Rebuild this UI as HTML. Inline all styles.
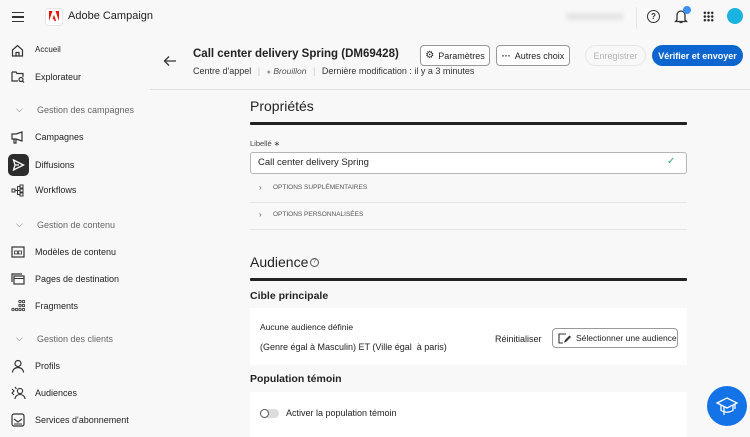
<!DOCTYPE html>
<html><head><meta charset="utf-8"><style>
*{box-sizing:border-box;margin:0;padding:0}
body{width:750px;height:437px;overflow:hidden;background:#f8f8f8;font-family:"Liberation Sans",sans-serif;color:#2c2c2c;position:relative}
.a{position:absolute;white-space:nowrap}
.nav{font-size:9px;color:#222}
.grp{font-size:9px;color:#666}
.btn{position:absolute;border:1px solid #999;border-radius:4px;background:#fff;font-size:9px;display:flex;align-items:center;justify-content:center;gap:4px;color:#222;white-space:nowrap}
</style></head><body>
<!-- top bar -->
<div class="a" style="left:12px;top:12px;width:12px;height:10px;border-top:1.5px solid #333;border-bottom:1.5px solid #333"></div>
<div class="a" style="left:12px;top:16px;width:12px;height:1.5px;background:#333"></div>
<div class="a" style="left:45px;top:8px;width:18px;height:18px;background:#fff;border-radius:3px;border:1px solid #e5e5e5"></div>
<svg class="a" style="left:49px;top:11px" width="10" height="10" viewBox="0 0 10 10"><path d="M3.5 0H0V10ZM6.5 0H10V10ZM5 3.7L7.2 10H5.6L5 8.2H3.5Z" fill="#eb1000"/></svg>
<div class="a" style="left:68px;top:10px;font-size:11px;color:#222">Adobe Campaign</div>
<div class="a" style="left:566px;top:13px;width:58px;height:7px;background:#e4e4e4;border-radius:4px;filter:blur(2px)"></div>
<div class="a" style="left:636px;top:7px;width:1px;height:22px;background:#e6e6e6"></div>
<div class="a" style="left:647px;top:10px;width:13px;height:13px;border:1.4px solid #333;border-radius:50%;font-size:8px;text-align:center;line-height:11px;font-weight:bold">?</div>
<svg class="a" style="left:674px;top:9px" width="14" height="15" viewBox="0 0 14 15"><path d="M3 11V6a4 4 0 0 1 8 0v5l1.5 1.5h-11ZM5.5 13.5h3" fill="none" stroke="#333" stroke-width="1.3"/></svg>
<div class="a" style="left:683px;top:6px;width:8px;height:8px;border-radius:50%;background:#3d8ff0"></div>
<div class="a" style="left:703px;top:11px;width:11px;height:11px;background:radial-gradient(circle,#222 1.1px,transparent 1.4px) 0 0/3.7px 3.7px"></div>
<div class="a" style="left:727px;top:8px;width:16px;height:16px;border-radius:50%;background:#19b3dd"></div>
<!-- sidebar -->
<svg class="a" style="left:11px;top:44px" width="13" height="13" viewBox="0 0 13 13"><path d="M1.5 6L6.5 1.5 11.5 6V12H1.5Z M5 12V8.5H8V12" fill="none" stroke="#333" stroke-width="1.2"/></svg>
<div class="a nav" style="left:35px;top:45px;font-size:8px">Accueil</div>
<svg class="a" style="left:11px;top:70px" width="14" height="13" viewBox="0 0 14 13"><path d="M1 2H5L6 3.5H12V7M1 2V11H7" fill="none" stroke="#333" stroke-width="1.2"/><circle cx="10" cy="9.5" r="2" fill="none" stroke="#333" stroke-width="1.2"/><path d="M11.5 11L13 12.5" stroke="#333" stroke-width="1.2"/></svg>
<div class="a nav" style="left:35px;top:72px">Explorateur</div>
<div class="a grp" style="left:16px;top:104px">⌵</div>
<div class="a grp" style="left:37px;top:105px">Gestion des campagnes</div>
<svg class="a" style="left:11px;top:131px" width="14" height="13" viewBox="0 0 14 13"><path d="M1 3H5L11 1V10L5 8H1ZM3 8V12H5V8" fill="none" stroke="#333" stroke-width="1.2"/></svg>
<div class="a nav" style="left:35px;top:132px">Campagnes</div>
<div class="a" style="left:8px;top:154px;width:21px;height:22px;background:#2c2c2c;border-radius:5px"></div>
<svg class="a" style="left:12px;top:159px" width="13" height="12" viewBox="0 0 13 12"><path d="M1.5 1L11.5 6 1.5 11 3 6ZM3 6H7" fill="none" stroke="#fff" stroke-width="1.3"/></svg>
<div class="a nav" style="left:35px;top:160px">Diffusions</div>
<svg class="a" style="left:11px;top:184px" width="14" height="13" viewBox="0 0 14 13"><rect x="1" y="5" width="3" height="3" fill="none" stroke="#333"/><rect x="9" y="1" width="3" height="3" fill="none" stroke="#333"/><rect x="9" y="5" width="3" height="3" fill="none" stroke="#333"/><rect x="9" y="9" width="3" height="3" fill="none" stroke="#333"/><path d="M4 6.5H9M6.5 2.5V10.5H9M6.5 2.5H9" fill="none" stroke="#333"/></svg>
<div class="a nav" style="left:35px;top:185px">Workflows</div>
<div class="a grp" style="left:16px;top:219px">⌵</div>
<div class="a grp" style="left:37px;top:220px">Gestion de contenu</div>
<svg class="a" style="left:11px;top:246px" width="14" height="12" viewBox="0 0 14 12"><rect x="1" y="1" width="12" height="10" fill="none" stroke="#333" stroke-width="1.2"/><rect x="3.5" y="5" width="3" height="3" fill="none" stroke="#333" stroke-width=".8"/><rect x="7.5" y="5" width="3" height="3" fill="none" stroke="#333" stroke-width=".8"/></svg>
<div class="a nav" style="left:35px;top:247px">Modèles de contenu</div>
<svg class="a" style="left:11px;top:273px" width="14" height="12" viewBox="0 0 14 12"><path d="M1 9V1H11" fill="none" stroke="#333" stroke-width="1.2"/><rect x="3" y="3" width="10" height="8" fill="none" stroke="#333" stroke-width="1.2"/><path d="M3 5.5H13" stroke="#333"/></svg>
<div class="a nav" style="left:35px;top:274px">Pages de destination</div>
<svg class="a" style="left:11px;top:299px" width="14" height="13" viewBox="0 0 14 13"><g fill="none" stroke="#333" stroke-width=".9"><circle cx="2" cy="10.5" r="1.2"/><circle cx="5.5" cy="10.5" r="1.2"/><circle cx="9" cy="10.5" r="1.2"/><circle cx="12.5" cy="10.5" r="1.2"/><circle cx="9" cy="6.5" r="1.2"/><circle cx="12.5" cy="6.5" r="1.2"/><circle cx="9" cy="2.5" r="1.2"/><circle cx="12.5" cy="2.5" r="1.2"/></g></svg>
<div class="a nav" style="left:35px;top:301px">Fragments</div>
<div class="a grp" style="left:16px;top:333px">⌵</div>
<div class="a grp" style="left:37px;top:334px">Gestion des clients</div>
<svg class="a" style="left:11px;top:359px" width="14" height="14" viewBox="0 0 14 14"><circle cx="7" cy="4.5" r="3" fill="none" stroke="#333" stroke-width="1.2"/><path d="M1.5 13.5a5.5 5 0 0 1 11 0" fill="none" stroke="#333" stroke-width="1.2"/></svg>
<div class="a nav" style="left:35px;top:361px">Profils</div>
<svg class="a" style="left:10px;top:386px" width="16" height="14" viewBox="0 0 16 14"><circle cx="10" cy="5" r="2.6" fill="none" stroke="#333" stroke-width="1.1"/><path d="M5 13a5 4.5 0 0 1 10 0M2 3l2 2-2 2 2 2M5 1l1.5 2" fill="none" stroke="#333" stroke-width="1.1"/></svg>
<div class="a nav" style="left:35px;top:388px">Audiences</div>
<svg class="a" style="left:11px;top:413px" width="14" height="14" viewBox="0 0 14 14"><rect x="1" y="1" width="12" height="12" rx="2" fill="none" stroke="#333" stroke-width="1.2"/><path d="M3 6L7 9 11 6M3 11H11" fill="none" stroke="#333" stroke-width="1.1"/></svg>
<div class="a nav" style="left:35px;top:415px">Services d'abonnement</div>
<!-- header -->
<svg class="a" style="left:163px;top:55px" width="14" height="12" viewBox="0 0 14 12"><path d="M13 6H1.5M6 1.5L1.5 6 6 10.5" fill="none" stroke="#333" stroke-width="1.3"/></svg>
<div class="a" style="left:193px;top:48px;font-size:11.5px;font-weight:bold;color:#222">Call center delivery Spring (DM69428)</div>
<div class="a" style="left:193px;top:66px;font-size:9px;color:#333">Centre d'appel <span style="color:#ccc;margin:0 4px">|</span> <span style="color:#999;font-size:7px">●</span> <i style="color:#555;font-size:8.5px">Brouillon</i> <span style="color:#ccc;margin:0 4px">|</span> Dernière modification : il y a 3 minutes</div>
<div class="btn" style="left:420px;top:45px;width:70px;height:21px"><span style="font-size:10px">⚙</span>Paramètres</div>
<div class="btn" style="left:496px;top:45px;width:74px;height:21px"><b>···</b> Autres choix</div>
<div class="btn" style="left:585px;top:45px;width:61px;height:21px;border-radius:11px;border-color:#e6e6e6;color:#b3b3b3;background:#f8f8f8">Enregistrer</div>
<div class="btn" style="left:652px;top:45px;width:91px;height:21px;border-radius:11px;border:none;background:#0d66d0;color:#fff;font-weight:bold">Vérifier et envoyer</div>
<div class="a" style="left:150px;top:89px;width:600px;height:1px;background:#e1e1e1"></div>
<!-- properties -->
<div class="a" style="left:250px;top:98px;font-size:14px;color:#222">Propriétés</div>
<div class="a" style="left:250px;top:122px;width:437px;height:3px;background:#222;border-radius:1px"></div>
<div class="a" style="left:250px;top:139px;font-size:7.5px;color:#444">Libellé ∗</div>
<div class="a" style="left:250px;top:152px;width:437px;height:22px;background:#fff;border:1px solid #b5b5b5;border-radius:3px"></div>
<div class="a" style="left:258px;top:157px;font-size:9.5px;color:#222">Call center delivery Spring</div>
<div class="a" style="left:667px;top:156px;font-size:10px;color:#2d9d78">✓</div>
<div class="a" style="left:259px;top:183px;font-size:8px;color:#555">›</div>
<div class="a" style="left:273px;top:184px;font-size:6.5px;color:#555">OPTIONS SUPPLÉMENTAIRES</div>
<div class="a" style="left:250px;top:202px;width:437px;height:1px;background:#e6e6e6"></div>
<div class="a" style="left:259px;top:210px;font-size:8px;color:#555">›</div>
<div class="a" style="left:273px;top:211px;font-size:6.5px;color:#555">OPTIONS PERSONNALISÉES</div>
<div class="a" style="left:250px;top:229px;width:437px;height:1px;background:#e6e6e6"></div>
<!-- audience -->
<div class="a" style="left:250px;top:254px;font-size:14px;color:#222">Audience</div>
<div class="a" style="left:310px;top:258px;width:9px;height:9px;border:1px solid #555;border-radius:50%;font-size:6px;text-align:center;line-height:7px;color:#555">?</div>
<div class="a" style="left:250px;top:278px;width:437px;height:3px;background:#222;border-radius:1px"></div>
<div class="a" style="left:250px;top:290px;font-size:10.5px;font-weight:bold;color:#222">Cible principale</div>
<div class="a" style="left:250px;top:308px;width:437px;height:57px;background:#fff"></div>
<div class="a" style="left:260px;top:322px;font-size:8.5px;color:#222">Aucune audience définie</div>
<div class="a" style="left:260px;top:342px;font-size:9px;color:#222">(Genre égal à Masculin) ET (Ville égal &nbsp;à paris)</div>
<div class="a" style="left:495px;top:334px;font-size:9px;color:#222">Réinitialiser</div>
<div class="btn" style="left:552px;top:328px;width:126px;height:20px;justify-content:flex-start;padding-left:5px;gap:5px;font-size:8.5px"><svg width="13" height="11" viewBox="0 0 13 11"><path d="M8 1H1V10H5" fill="none" stroke="#333" stroke-width="1.1"/><path d="M6 10L7 7 11.5 2.5 13 4 8.5 8.5Z" fill="#333"/></svg>Sélectionner une audience</div>
<div class="a" style="left:250px;top:373px;font-size:10.5px;font-weight:bold;color:#222">Population témoin</div>
<div class="a" style="left:250px;top:392px;width:437px;height:45px;background:#fff"></div>
<div class="a" style="left:260px;top:409px;width:19px;height:9px;border-radius:5px;background:#ddd"></div>
<div class="a" style="left:260px;top:409px;width:9px;height:9px;border-radius:50%;border:1.5px solid #555;background:#fff"></div>
<div class="a" style="left:286px;top:408px;font-size:9px;color:#222">Activer la population témoin</div>
<!-- fab -->
<div class="a" style="left:707px;top:386px;width:40px;height:40px;border-radius:50%;background:#1473e6"></div>
<svg class="a" style="left:715px;top:395px" width="24" height="22" viewBox="0 0 24 22"><path d="M2 8L12 3 22 8 12 13Z M6 10.5V15.5Q12 19 18 15.5V10.5M20 9V14M9 12V20" fill="none" stroke="#fff" stroke-width="1.3"/></svg>
</body></html>
